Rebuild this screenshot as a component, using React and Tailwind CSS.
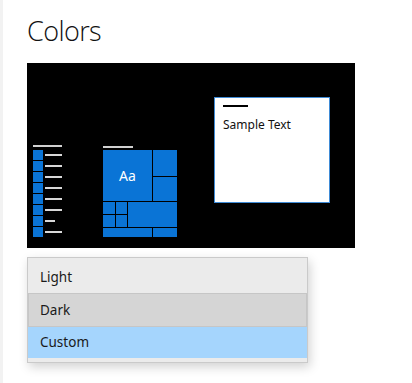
export default function App() {
  const font = { fontFamily: '"Open Sans", "Noto Sans", sans-serif' };
  const lines = [17, 17, 17, 17, 17, 17, 10, 17];
  return (
    <div className="w-[412px] h-[383px] bg-white flex overflow-hidden" style={font}>
      <div className="w-[3px] h-full bg-[#f2f2f2]" />
      <div className="flex flex-col pl-[24px]">
        <div className="h-[63px] pt-[13px] text-[27px] leading-[36px] font-light text-[#111] tracking-[-0.6px]">Colors</div>
        <div className="w-[328px] h-[185px] bg-black flex items-end px-[6px] pb-[11px]">
          <div className="w-[29px] flex flex-col">
            <div className="h-[2px] w-[29px] bg-[#d0d0d0] mb-[3px]" />
            <div className="flex flex-col gap-px">
              {lines.map((w, i) => (
                <div key={i} className="flex items-center h-[10px] gap-[2px]">
                  <div className="w-[10px] h-[10px] bg-[#0a74d6]" />
                  <div className="h-[2px] bg-[#d8d8d8]" style={{ width: w }} />
                </div>
              ))}
            </div>
          </div>
          <div className="ml-[41px] w-[74px] flex flex-col">
            <div className="h-[2px] w-[30px] bg-[#d0d0d0] mb-[2px]" />
            <div className="w-[74px] h-[87px] flex flex-col gap-px">
              <div className="flex gap-px h-[51px]">
                <div className="w-[49px] bg-[#0a74d6] flex items-center justify-center text-white text-[14px]" style={{ fontFamily: '"Noto Sans", sans-serif' }}>Aa</div>
                <div className="w-[24px] flex flex-col gap-px">
                  <div className="h-[26px] bg-[#0a74d6]" />
                  <div className="h-[24px] bg-[#0a74d6]" />
                </div>
              </div>
              <div className="flex gap-px h-[25px]">
                <div className="grid grid-cols-[12px_11px] grid-rows-[12px_12px] gap-px">
                  <div className="bg-[#0a74d6]" />
                  <div className="bg-[#0a74d6]" />
                  <div className="bg-[#0a74d6]" />
                  <div className="bg-[#0a74d6]" />
                </div>
                <div className="w-[49px] bg-[#0a74d6]" />
              </div>
              <div className="flex gap-px h-[9px]">
                <div className="w-[49px] bg-[#0a74d6]" />
                <div className="w-[24px] bg-[#0a74d6]" />
              </div>
            </div>
          </div>
          <div className="ml-[37px] mb-[34px] w-[116px] h-[106px] bg-white border border-[#3f8bd6] flex flex-col pl-[8px] pt-[7px]">
            <div className="w-[25px] h-[2px] bg-black" />
            <div className="mt-[10px] text-[12px] leading-[16px] text-[#111]" style={{ fontFamily: '"Noto Sans", sans-serif' }}>Sample Text</div>
          </div>
        </div>
        <div className="mt-[9px] w-[281px] border border-[#cacaca] bg-[#ebebeb] shadow-[2px_4px_10px_rgba(0,0,0,0.18)] flex flex-col pt-[3px] pb-[4px] text-[13.5px] text-[#1a1a1a]" style={{ fontFamily: '"Noto Sans", sans-serif' }}>
          <div className="h-[32px] flex items-center pl-[12px]">Light</div>
          <div className="h-[34px] flex items-center pl-[11px] bg-[#d5d5d5] border border-[#c6c6c6]">Dark</div>
          <div className="h-[31px] flex items-center pl-[12px] bg-[#a5d5fd]">Custom</div>
        </div>
      </div>
    </div>
  );
}
